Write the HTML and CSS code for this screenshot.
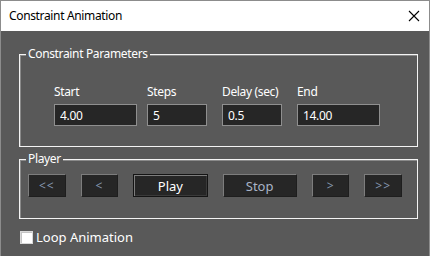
FILE: index.html
```html
<!DOCTYPE html>
<html lang="en">
<head>
  <meta charset="UTF-8" />
  <title>Constraint Animation</title>
  <link rel="stylesheet" href="styles.css">
</head>
<body>
  <div class="window">
    <div class="titlebar">
      <span class="title">Constraint Animation</span>
      <svg class="close" width="12" height="12" viewBox="0 0 12 12">
        <path d="M1 1 L11 11 M11 1 L1 11" stroke="#000" stroke-width="1.1" fill="none"/>
      </svg>
    </div>

    <div class="content">
      <div class="group params">
        <span class="legend">Constraint Parameters</span>
        <div class="field wide">
          <label>Start</label>
          <input type="text" value="4.00">
        </div>
        <div class="field narrow">
          <label>Steps</label>
          <input type="text" value="5">
        </div>
        <div class="field narrow">
          <label>Delay (sec)</label>
          <input type="text" value="0.5">
        </div>
        <div class="field wide">
          <label>End</label>
          <input type="text" value="14.00">
        </div>
      </div>

      <div class="group player">
        <span class="legend">Player</span>
        <button class="small">&lt;&lt;</button>
        <button class="small">&lt;</button>
        <button class="large default">Play</button>
        <button class="large stop">Stop</button>
        <button class="small">&gt;</button>
        <button class="small">&gt;&gt;</button>
      </div>

      <label class="loop">
        <span class="check"></span>
        Loop Animation
      </label>
    </div>
  </div>
</body>
</html>
```

FILE: styles.css
```css
* {
  box-sizing: border-box;
}

body {
  margin: 0;
  font-family: 'Noto Sans', 'Open Sans', sans-serif;
  font-size: 12px;
  letter-spacing: -0.35px;
  background-color: #595959;
}

.window {
  width: 430px;
  height: 256px;
  border: 1px solid #8c8c8c;
  border-bottom: none;
  display: flex;
  flex-direction: column;
}

.titlebar {
  height: 30px;
  background-color: #fff;
  color: #000;
  display: flex;
  align-items: center;
  justify-content: space-between;
  padding: 0 8px 0 8px;
  line-height: 30px;
  flex-shrink: 0;
}

.close {
  margin-right: 1px;
}

.content {
  flex: 1;
  background-color: #595959;
  padding: 23px 11px 0 18px;
  color: #fff;
}

.group {
  position: relative;
  width: 399px;
  border: 1px solid #f4f4f4;
  box-shadow: inset 1px 1px 0 #8a8a8a;
  display: flex;
}

.legend {
  position: absolute;
  top: -9px;
  left: 6px;
  padding: 0 2px;
  line-height: 16px;
  background-color: #595959;
  color: #fff;
}

.params {
  height: 93px;
  padding: 29px 0 0 34px;
}

.field {
  margin-right: 15px;
}

.field:first-of-type {
  margin-right: 10px;
}

.field label {
  display: block;
  height: 16px;
  line-height: 16px;
  margin-bottom: 4px;
  color: #fff;
}

.field input {
  display: block;
  height: 22px;
  border: 1px solid #8f8f8f;
  background-color: #262626;
  color: #fff;
  font-family: inherit;
  font-size: 12px;
  letter-spacing: -0.35px;
  padding: 0 0 0 5px;
  outline: none;
}

.field.wide input {
  width: 83px;
}

.field.narrow input {
  width: 60px;
}

.player {
  height: 60px;
  margin-top: 12px;
  padding: 14px 0 0 8px;
  align-items: flex-start;
}

button {
  height: 23px;
  margin-right: 15px;
  font-family: inherit;
  font-size: 12px;
  background-color: #262626;
  color: #8597b0;
  border: 1px solid;
  border-color: #7d7d7d #1e1e1e #1e1e1e #7d7d7d;
  padding: 0;
  line-height: 20px;
}

button.small {
  width: 38px;
  letter-spacing: 1px;
}

button.large {
  width: 75px;
}

button.default {
  color: #fff;
  font-size: 13px;
  border-color: #141414;
  box-shadow: inset 1px 1px 0 #7d7d7d, inset -1px -1px 0 #3a3a3a;
  margin-right: 15px;
}

button.stop {
  color: #a9b5c6;
  font-size: 13px;
}

.loop {
  display: flex;
  align-items: center;
  margin-top: 11px;
  margin-left: 1px;
  font-size: 13px;
  letter-spacing: 0;
  line-height: 14px;
  color: #fff;
}

.check {
  width: 13px;
  height: 13px;
  border: 1px solid #d8d8d8;
  background-color: #fff;
  box-shadow: inset 1px 1px 0 #c4c4c4;
  margin-right: 3px;
}
```
